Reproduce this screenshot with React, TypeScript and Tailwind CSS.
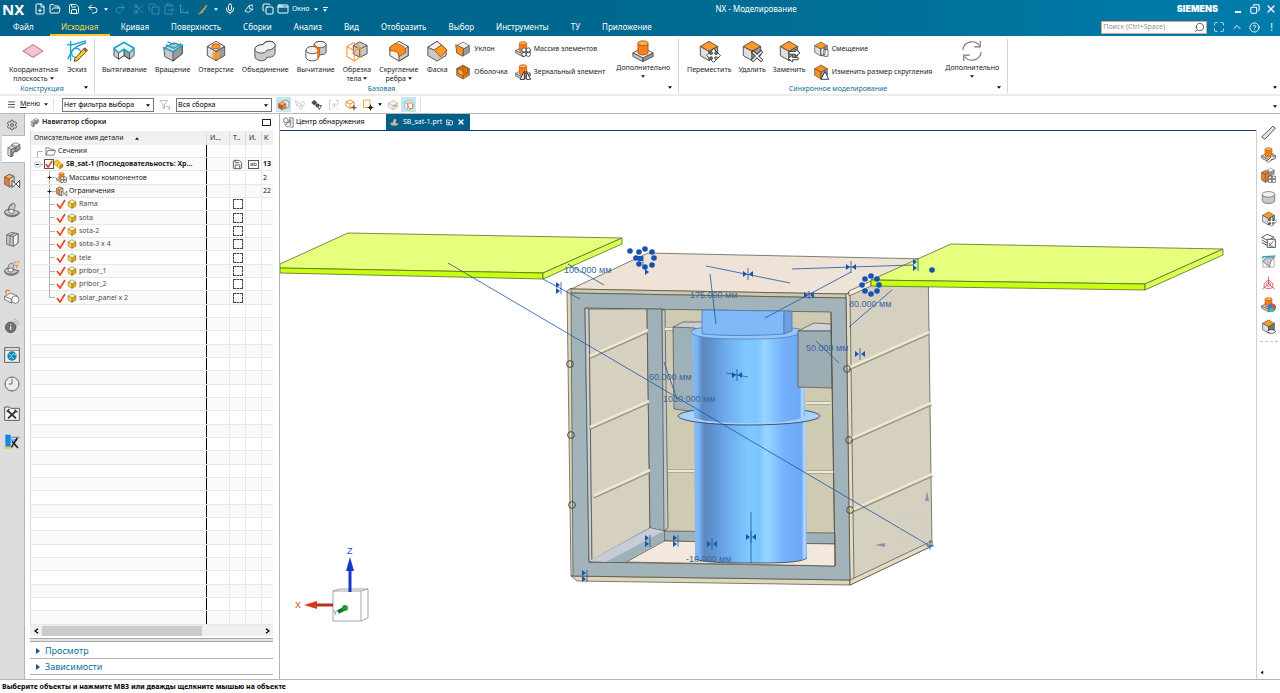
import React, { ReactNode } from "react";
import {
  Save, Undo2, Redo2, Scissors, Copy, ClipboardPaste, Move3d, Mic, AppWindow, Maximize, ChevronUp,
  CircleHelp, Settings, Search, X, FilePlus, FolderOpen, Menu, FolderInput,
} from "lucide-react";

const O = "#ff9a26";
const G1 = "#f1f1f1";
const G2 = "#c9c9c9";
const G3 = "#9b9b9b";
const K = "#4a4a4a";

/* ---------- isometric icon parts ---------- */

type Tint = { top?: string; left?: string; right?: string };

function Cube({ top = G1, left = "#dedede", right = G3 }: Tint) {
  return (
    <g stroke={K} strokeWidth="1" strokeLinejoin="round">
      <path d="M12 1.500l9.500 5.500-9.500 5.500L2.500 7z" fill={top} />
      <path d="M2.500 7l9.500 5.500v10L2.500 17z" fill={left} />
      <path d="M21.500 7L12 12.500v10l9.500-5.500z" fill={right} />
    </g>
  );
}

function Boss() {
  return (
    <g stroke={K} strokeWidth="1" strokeLinejoin="round">
      <path d="M1 14l11 5.500v4L1 18z" fill={G2} />
      <path d="M23 14l-11 5.500v4L23 18z" fill={G3} />
      <path d="M1 14l11 5.500L23 14 12 8.500z" fill={G1} />
      <path d="M6.500 3.500v10.500c0 3 11 3 11 0V3.500" fill="#f77f1d" stroke="#b35408" />
      <ellipse cx="12" cy="3.500" rx="5.500" ry="2.500" fill="#ffb057" stroke="#b35408" />
    </g>
  );
}

function MoveMark() {
  return (
    <path
      d="M17 9.500l3.500 3.500H18.500v2.500H21v-2L24.500 17 21 20.500v-2h-2.500V21h2L17 24.500 13.500 21h2v-2.500H13v2L9.500 17 13 13.500v2h2.500V13h-2z"
      fill="#fff" stroke="#333" strokeWidth="1" strokeLinejoin="round"
    />
  );
}

const glyphs: Record<string, ReactNode> = {
  plane: <path d="M12 5l11 7-11 7-11-7z" fill="#f3c3cf" stroke="#b5637b" strokeWidth="1" />,
  sketch: (
    <g fill="none" strokeWidth="1.500">
      <path d="M1 5C8 7 14 2 22 1M5 1v22M2 21C6 12 8 7 22 3" stroke="#1c9fcb" />
      <circle cx="11" cy="14" r="5" stroke="#1c9fcb" />
      <path d="M10 20L20 9l3 2.500L13 22l-4 1.500z" fill="#ffc933" stroke="#5b4310" strokeWidth="1" />
      <path d="M19 10l1.500-1.500 3 2.500-1.500 1.500z" fill="#d9452f" stroke="#5b4310" strokeWidth=".6" />
    </g>
  ),
  extrude: (
    <g stroke={K} strokeLinejoin="round">
      <path d="M1 9l11-6.500L23 9v8l-5 4-6-4-6 4-5-4z" fill={G2} />
      <path d="M12 10l6 4v7l-6-4z" fill={G3} />
      <path d="M12 10l-6 4v7l6-4z" fill={G1} />
      <path d="M1 9l5 5 6-4 6 4 5-5-11-6.500z" fill={G1} stroke="#14a4d4" strokeWidth="1.600" />
    </g>
  ),
  revolve: (
    <g stroke={K} strokeLinejoin="round">
      <path d="M2 9L13 3l9 3v9l-10 8-9-5z" fill={G2} />
      <path d="M12 13l10-7v9l-10 8z" fill={G3} />
      <path d="M1 8l11 5 11-8M4 5l9 4 8-5M6 2l8 3" fill="none" stroke="#14a4d4" strokeWidth="1.600" />
    </g>
  ),
  hole: (
    <g>
      <Cube />
      <ellipse cx="12" cy="7" rx="4.500" ry="2.600" fill={O} stroke="#b35408" />
      <path d="M8 12v7c1 3 7 3 8 0v-7c-1 2-7 2-8 0z" fill={O} opacity=".85" />
    </g>
  ),
  unite: (
    <g stroke={K} strokeWidth="1">
      <path d="M1 10v8c0 5 12 7 13 1 6 0 9-2 9-5V5c-1-5-12-5-13 0-5 0-9 2-9 5z" fill={G2} />
      <path d="M1 10c0 5 12 6 13 1 6 0 9-3 9-6-1-5-12-4-13 0-5 0-9 2-9 5z" fill={G1} />
    </g>
  ),
  subtract: (
    <g stroke={K} strokeWidth="1">
      <path d="M10 5v8c2 4 13 4 13 0V5C22 .500 11 .500 10 5z" fill={G2} />
      <ellipse cx="16.500" cy="5" rx="6.500" ry="3.500" fill={G1} />
      <path d="M1 11v8c1 5 13 5 14 0v-8" fill="#fff" />
      <ellipse cx="8" cy="11" rx="7" ry="4" fill={G1} />
      <path d="M10 5c3 3 5 4 6 4v8l-2 3V11c-1-2-2-3-4-4z" fill="#f77f1d" stroke="#d2600a" />
    </g>
  ),
  trim: (
    <g fill="none" strokeLinejoin="round">
      <path d="M8 6l7-4 8 4v9l-8 4-7-4z" fill={G2} stroke={K} />
      <path d="M8 6l7 4 8-4M15 10v9" stroke={K} />
      <path d="M1 7l7-4 8 5v10l-7 5-8-5zM1 7l8 5 7-4M9 12v11" stroke={O} strokeWidth="1.200" />
    </g>
  ),
  blend: (
    <g stroke={K} strokeLinejoin="round">
      <path d="M2 8l10-6.500L22 7v10l-10 6-10-6z" fill={G1} />
      <path d="M12 15v8l10-6V7z" fill={G2} />
      <path d="M2 8l5-4c5 0 11 3 12 6v4l-7 4c0-4-4-7-10-6z" fill="#ff8d1a" stroke="#b35408" />
    </g>
  ),
  chamfer: (
    <g stroke={K} strokeLinejoin="round">
      <path d="M2 8l10-6.500L22 10v7l-10 6-10-6z" fill={G2} />
      <path d="M2 8l10-6.500 5 4L9 11z" fill={G1} />
      <path d="M17 5.500l6 5.500-7 7.500-7-7.500z" fill={O} stroke="#b35408" />
    </g>
  ),
  boss: <Boss />,
  move: <g><Cube top={O} /><MoveMark /></g>,
  del: <g><Cube top={O} /><path d="M12 12l11 11M23 12L12 23" stroke="#333" strokeWidth="3.500" /><path d="M13 13l9.500 9.500M22.500 12.500L12.500 22.500" stroke="#fff" strokeWidth="1.600" /></g>,
  replace: <g><Cube top={O} /><path d="M12 12.500h7v-2.500l5 4-5 4v-2.500h-7zM22 21.500h-6V24l-5-4 5-3.500V19h6z" fill="#fff" stroke="#333" /></g>,
  refresh: (
    <g fill="none" stroke="#777" strokeWidth="1.200">
      <path d="M2 11a10 10 0 0 1 18-5M21 1v6.500h-6.500M22 13a10 10 0 0 1-18 5M3 23v-6.500h6.500" />
    </g>
  ),
  draft: <g><Cube /><path d="M1 5.500l12 5.500-1.500 12L2.500 18z" fill="#ff8d1a" stroke={K} /></g>,
  shell: <g><Cube top="#ffb057" left="#f78a20" right="#f78a20" /><path d="M4.500 7L12 3l7.500 4v7L12 18l-7.500-4z" fill="#e57412" stroke="#7c3a05" /><path d="M12 11v7l-7.500-4V7zM12 3v8M19.500 14L12 11" fill="#ffab55" stroke="#a85506" /></g>,
  pattern: <g><Boss /><g fill="#fff" stroke="#333" strokeWidth="1.200"><circle cx="13.500" cy="13.500" r="3.200" /><circle cx="20" cy="13.500" r="3.200" /><circle cx="13.500" cy="20" r="3.200" /><circle cx="20" cy="20" r="3.200" /></g></g>,
  mirror: <g><Boss /><path d="M14 23V11L7.500 23zM17 23V11l6.500 12z" fill="#fff" stroke="#222" strokeWidth="1.300" /></g>,
  offset: <g><Cube top={O} /><path d="M12 11h6v10h-6zM16 13h6.500v10H16z" fill="#fff" stroke="#333" /></g>,
  resize: <g><Cube top="#ff8d1a" left="#ff8d1a" /><path d="M12 23l6-12 5.500 12z" fill="#fff" stroke="#222" strokeWidth="1.300" /></g>,
  navigator: (
    <g stroke={K} strokeLinejoin="round">
      <path d="M9 4l7-3 6 3v8l-6 4-7-3z" fill={G1} />
      <path d="M16 7l6-3v8l-6 4z" fill={G3} />
      <path d="M3 9l6-3 6 3v6l-4 2v5l-3 1.500L3 21z" fill="#dedede" />
      <path d="M3 9l5 3 7-3M8 12v11.500M9 4l7 3" fill="none" />
      <path d="M8 12l7-3v6l-4 2v5l-3 1.500z" fill={G3} />
    </g>
  ),
  constraint: (
    <g>
      <g stroke={K} strokeLinejoin="round">
        <path d="M1 6l7-4 7 3v10l-7 6-7-4z" fill="#f77f1d" />
        <path d="M1 6l7-4 7 3-7 4z" fill="#ffb057" />
        <path d="M8 9l7-4v11l-7 5z" fill="#d8d8d8" />
      </g>
      <path d="M12 11v11l5.500-5.500zM23.500 11v11L18 16.500z" fill="#fff" stroke="#222" strokeWidth="1.200" />
    </g>
  ),
  part: (
    <g stroke={K} strokeLinejoin="round">
      <path d="M1 16c0-3 3-5 8-5l14 5c0 3-6 6-11 6S1 20 1 16z" fill={G3} />
      <path d="M1 15c0-2 3-4 6-3C7 5 11 1 15 2c3 1 2 7-1 10l9 3c-1 3-6 5-11 5S1 18 1 15z" fill={G2} />
      <ellipse cx="11" cy="14" rx="4" ry="3" fill={G1} />
      <path d="M7 12c0-5 3-8 6-8" fill="none" />
    </g>
  ),
  partMark: (
    <g stroke={K} strokeLinejoin="round">
      <path d="M1 17c0-3 3-5 8-5l13 5c0 3-6 6-11 6S1 21 1 17z" fill={G3} />
      <path d="M1 16c0-2 3-4 5-3 0-7 4-9 7-8 3 1 2 6-1 9l10 2c-1 3-6 5-11 5S1 19 1 16z" fill={G2} />
      <ellipse cx="10" cy="15" rx="4" ry="3" fill={G1} />
      <path d="M15 2l3 3M18 2l-3 3M20 1l3 3M23 1l-3 3M16 8h6M19 8v4" stroke="#f07b1c" strokeWidth="1.200" fill="none" />
    </g>
  ),
  books: (
    <g stroke={K} strokeLinejoin="round">
      <path d="M4 6l7-4 10 2v14l-7 5-10-3z" fill={G2} />
      <path d="M4 6l10 2.500L21 4M14 8.500V23M9 7l7-4M9 7.500v14" fill="none" />
      <path d="M14 8.500L21 4v14l-7 5z" fill={G1} />
    </g>
  ),
  reuse: (
    <g stroke={K} strokeLinejoin="round">
      <path d="M1 11l9-5 9 4v4l-8 7-10-5z" fill={G1} />
      <path d="M1 11l10 4 8-5M11 15v6" fill="none" />
      <circle cx="17" cy="16" r="5.500" fill="#fff" />
      <path d="M3 7V2h6" stroke="#f07b1c" strokeWidth="2" fill="none" />
    </g>
  ),
  info: (
    <g>
      <circle cx="10" cy="14" r="8" fill="#707070" stroke="#444" /><path d="M10 12v6M10 9v1.500" stroke="#ddd" strokeWidth="2" />
      <path d="M14 4a8 8 0 0 1 6 7M15 1a11 11 0 0 1 8 9" fill="none" stroke="#999" />
    </g>
  ),
  web: (
    <g>
      <path d="M1 1h22v22H1z" fill="#eee" stroke={K} strokeWidth="1.300" /><path d="M1 5h22" stroke={K} />
      <circle cx="12" cy="13.500" r="7" fill="#1583b5" /><path d="M7 10l4 3 4-3 3 2M8 17l3-2 4 3" stroke="#bfe6f7" fill="none" strokeWidth="1.300" />
    </g>
  ),
  clock: <g fill="#ececec" stroke="#555" strokeWidth="1.300"><circle cx="12" cy="12" r="10.500" /><path d="M12 4v8H7M12 2v1M12 21v1M2 12h1M21 12h1" fill="none" /></g>,
  tools: (
    <g fill="none" stroke="#444" strokeWidth="1.300">
      <path d="M1 23V3h7l2 2h13v18z" fill="#f4f4f4" />
      <path d="M6 9l12 11M18 9L6 20" stroke="#333" strokeWidth="2.800" />
      <path d="M4 10l4-4M16 7l4 4" stroke="#333" strokeWidth="2" />
    </g>
  ),
  prt: <Cube top="#fff1a0" left="#ffd83a" right="#f2a900" />,
  asm: <g stroke="#8a5a00" strokeLinejoin="round"><path d="M1 6l6-4 6 4v7l-6 4-6-4z" fill="#ffcc1f" /><path d="M8 13l6-4 7 4v6l-7 4-6-4z" fill="#ffe15a" /><path d="M14 15l7-3v7l-7 4z" fill="#f77f1d" /></g>,
  folder: <path d="M2 20V4h7l2 3h8v3M2 20l4-10h17l-4 10z" fill="#fff" stroke="#444" strokeWidth="1.400" />,
  ruler: <path d="M1 19L19 2l4 3L6 23z" fill="#e4e4e4" stroke="#444" strokeWidth="1.400" />,
  bossTool: <g><Boss /><path d="M9 23l7-7c-1-3 1-5 4-5l-2 3 2 2 3-2c1 4-2 6-5 5l-6 6z" fill="#fff" stroke="#333" /></g>,
  parts: (
    <g>
      <g transform="translate(8 -1) scale(.62)"><Cube /></g>
      <path d="M1 7l6-3 6 3v7l-2 1v6l-4 2-6-4z" fill="#f77f1d" stroke={K} />
      <path d="M1 7l6 3 6-3M7 10v13" fill="none" stroke={K} />
      <path d="M12 13h5v4h-5zM18 13h5v4h-5zM12 18h5v5h-5zM18 18h5v5h-5z" fill="#fff" stroke="#333" />
    </g>
  ),
  cyl: <g stroke={K}><path d="M2 7v10c0 6 20 6 20 0V7" fill={G2} /><ellipse cx="12" cy="7" rx="10" ry="4.500" fill={G1} /></g>,
  layers: <g stroke="#333" fill="#fff"><path d="M1 15l9 5 9-5M1 11l9 5 9-5M1 7l9-5 11 5-10 5z" strokeWidth="1.300" /><path d="M10 10h13v13H10z" strokeWidth="1.300" /><path d="M13 21l8-9M14 15v6h6" fill="none" /></g>,
  surf: <g fill="none" stroke="#888"><path d="M3 4h18v17H3z" /><path d="M8 6h13c-5 3-7 9-7 15L3 12z" fill={G2} stroke={K} /><path d="M1 6c7-4 14-1 22-3" stroke="#14a4d4" strokeWidth="1.800" /></g>,
  csys: <g fill="none" stroke="#d4485a" strokeWidth="1.300"><path d="M12 13V1M12 13l-10 8M12 13l10 8M5 18a9 9 0 0 1 7-11 9 9 0 0 1 7 11c-4 3-10 3-14 0z" /><path d="M12 10l3 2v3l-3 2-3-2v-3z" /></g>,
  bossColor: <g><Boss /><circle cx="17" cy="17" r="6.500" fill="#2f7fe0" /><path d="M17 17v-6.500a6.500 6.500 0 0 1 6 8z" fill="#f04b2d" /><path d="M17 17l5.500 3.500a6.500 6.500 0 0 1-11 0z" fill="#3cc66b" /></g>,
  cubeEye: <g><Cube top={O} right="#777" /><path d="M10 20c3-4 10-4 13.500 0-4 4-10.500 4-13.500 0z" fill="#fff" stroke="#222" strokeWidth="1.300" /></g>,
  selCube: <g><path d="M8 6l6-4 8 3v10l-6 4-8-4z" fill="#e8e8e8" stroke={K} /><g transform="translate(-1 4) scale(.78)"><Cube top="#ffb057" left="#f04e12" right="#f77f1d" /></g></g>,
  links: <g fill="none" stroke="#c2c2c2" strokeWidth="1.600"><path d="M3 3l7 5-5 6z" /><circle cx="17" cy="9" r="4" /><path d="M10 13l8 3-5 6z" /></g>,
  linksDark: <g fill="#666" stroke="#222" strokeWidth="1.600"><path d="M7 2v12M1 8h12" /><path d="M4 5h6v6H4zM11 11h6v6h-6z" /><path d="M15 15l8-1-5 9z" fill="#fff" /></g>,
  bracket: <g fill="none" stroke="#c2c2c2" strokeWidth="1.600"><path d="M7 3H3v18h4M16 3h4v8M8 12h10M12 7v11M16 17l5 5" /></g>,
  wire: <g fill="none" stroke="#ef7d10" strokeWidth="1.700"><path d="M10 2l8 4v8l-8 5-8-5V6zM2 6l8 4 8-4M10 10v9" /><path d="M18 12v11M12.500 17.500h11" stroke="#222" /></g>,
  box: <g fill="none" strokeWidth="1.800"><path d="M3 2h13v15H3z" stroke="#efa02a" /><path d="M17 11v12M11 17h12M14 14l6 6M20 14l-6 6" stroke="#222" /></g>,
  ghost: <g fill="#eee" stroke="#999"><path d="M12 3l9 5v8l-9 6-9-6V8zM3 8l9 5 9-5M12 13v9" /><path d="M12 13l8 1" stroke={O} strokeWidth="3" /></g>,
  ghost2: <g fill="#eee" stroke="#888"><path d="M12 2l9 5v10l-9 6-9-6V7z" /><path d="M9 8h7l3 3v8h-7z" fill="#fff" stroke="#f07b1c" strokeWidth="1.800" /><path d="M3 7l6 3v10" fill="none" /></g>,
  brush: <path d="M3 22l5-4L20 3l2 1L11 19z" fill="#ff9a26" stroke="#ffb057" />,
  touch: <g fill="none" stroke="#fff" strokeWidth="2"><path d="M2 17L12 4l2 8h8L11 20z" /><path d="M12 4l8-2v6" /></g>,
  filter: <g fill="none" stroke="#aaa" strokeWidth="1.500"><path d="M2 3h15l-6 8v9l-3-2v-7zM13 15h8v6M21 21l-3-3" /></g>,
  hand: <g fill="none" stroke="#444" strokeWidth="1.500"><path d="M2 4l5-2 4 3v6l-4 2-5-2zM13 2h9v20h-6" /><path d="M4 14c0 10 12 10 13 1V6h-3v7c-5-3-8 2-5 5" /></g>,
  npc: <g><path d="M2 1h8v18H2z" fill="#1687e0" /><path d="M10 5h13M10 9h10" stroke="#4aa3e8" strokeWidth="2" /><path d="M11 20l9-14M12 11l9 10" stroke="#222" strokeWidth="2.500" /><path d="M1 19h9v3H1z" fill="#f2c12e" /></g>,
};

function Glyph({ name, className }: { name: string; className: string }) {
  return (
    <svg viewBox="0 0 24 24" className={`shrink-0 overflow-visible ${className}`} aria-hidden="true">
      {glyphs[name]}
    </svg>
  );
}

function Caret({ className = "" }: { className?: string }) {
  return (
    <svg viewBox="0 0 6 4" className={`h-[3px] w-[4px] shrink-0 ${className}`} aria-hidden="true">
      <path d="M0 0h6L3 4z" fill="currentColor" />
    </svg>
  );
}

/* ---------- title bar ---------- */

function Quick({ label, dim, children }: { label: string; dim?: boolean; children: ReactNode }) {
  return (
    <button aria-label={label} className={`flex h-[17px] w-[15px] shrink-0 items-center justify-center ${dim ? "opacity-25" : ""}`}>
      {children}
    </button>
  );
}

const tabs = ["Кривая", "Поверхность", "Сборки", "Анализ", "Вид", "Отобразить", "Выбор", "Инструменты", "ТУ", "Приложение"];

function Header() {
  const ic = "h-3 w-3";
  return (
    <header className="h-[36px] shrink-0 bg-linear-to-r from-[#00628a] via-[#00698f] to-[#007cab] text-white">
      <div className="grid h-[18px] grid-cols-[1fr_auto_1fr] items-center">
        <div className="flex items-center">
          <span className="w-[32px] pl-[2px] text-[15px] leading-[18px] font-bold">NX</span>
          <Quick label="Создать"><FilePlus className={ic} /></Quick>
          <Quick label="Открыть"><FolderOpen className={ic} /></Quick>
          <span className="w-[4px]" />
          <Quick label="Сохранить"><Save className={ic} /></Quick>
          <span className="w-[4px]" />
          <Quick label="Отменить"><Undo2 className={ic} /></Quick>
          <Caret className="mx-[4px]" />
          <Quick label="Вернуть" dim><Redo2 className={ic} /></Quick>
          <span className="w-[4px]" />
          <Quick label="Вырезать" dim><Scissors className={ic} /></Quick>
          <Quick label="Копировать" dim><Copy className={ic} /></Quick>
          <Quick label="Вставить" dim><ClipboardPaste className={ic} /></Quick>
          <Quick label="Переместить" dim><Move3d className={ic} /></Quick>
          <span className="w-[4px]" />
          <Quick label="Кисть"><Glyph name="brush" className="h-[11px] w-[11px]" /></Quick>
          <Caret className="mx-[4px]" />
          <Quick label="Микрофон"><Mic className={ic} /></Quick>
          <span className="w-[4px]" />
          <Quick label="Касание"><Glyph name="touch" className="h-[10px] w-[10px]" /></Quick>
          <span className="w-[4px]" />
          <Quick label="Переключить окно"><Copy className={ic} /></Quick>
          <Quick label="Окно приложения"><AppWindow className={ic} /></Quick>
          <button className="flex items-center gap-[4px] pl-[2px] text-[7px]">
            Окно <Caret />
          </button>
          <span className="ml-[5px] flex flex-col items-center gap-[1px]">
            <span className="h-[1px] w-[5px] bg-white" />
            <Caret />
          </span>
        </div>
        <h1 className="pl-[232px] text-[8px] leading-[18px] whitespace-nowrap">NX - Моделирование</h1>
        <div className="flex items-center justify-end gap-[5px] pr-[3px]">
          <span className="mr-[12px] font-[Inter] text-[9px] font-black">SIEMENS</span>
          <button aria-label="Свернуть" className="flex h-[10px] w-[10px] items-end pb-[1px]"><span className="h-[2px] w-[6px] bg-white" /></button>
          <button aria-label="Восстановить"><Copy className="h-[10px] w-[10px] -scale-x-100" strokeWidth={2.5} /></button>
          <button aria-label="Закрыть"><X className="h-[12px] w-[12px]" strokeWidth={2.5} /></button>
        </div>
      </div>
      <div className="flex h-[18px] items-stretch justify-between">
        <nav className="flex items-stretch text-[8px]">
          <button className="pr-[15px] pl-[13px]">Файл</button>
          <button className="ml-[1px] w-[60px] border-b-2 border-[#ffc72c] pt-[2px] text-[#ffd24a]">Исходная</button>
          {tabs.map((t) => (
            <button key={t} className="px-[11px]">{t}</button>
          ))}
        </nav>
        <div className="flex items-center gap-[6px] pr-[7px]">
          <label className="flex h-[13px] w-[106px] items-center border border-[#d9a38f] bg-white text-black">
            <input aria-label="Поиск" placeholder="Поиск (Ctrl+Space)" className="w-0 grow pl-[1px] text-[7px] outline-none placeholder:text-[#909090]" />
            <Search className="mr-[1px] h-[11px] w-[11px] -scale-x-100 text-[#555]" />
          </label>
          <Maximize className="h-3 w-3" strokeWidth={1.5} />
          <ChevronUp className="h-3 w-3" />
          <CircleHelp className="h-[11px] w-[11px]" />
          <span className="ml-[4px] text-[10px] leading-[12px]">!</span>
        </div>
      </div>
    </header>
  );
}

/* ---------- ribbon ---------- */

function Big({ icon, label, second, caret, down }: { icon: string; label: string; second?: string; caret?: boolean; down?: boolean }) {
  return (
    <button className="flex flex-col items-center pt-[4px] leading-[9px] whitespace-nowrap">
      <Glyph name={icon} className="h-[22px] w-[22px]" />
      <span className={down ? "pt-[1px]" : "pt-[3px]"}>{label}</span>
      {second && (
        <span className="flex items-center gap-[2px]">{second}<Caret /></span>
      )}
      {caret && <Caret className="mt-[3px]" />}
    </button>
  );
}

function Small({ icon, label }: { icon: string; label: string }) {
  return (
    <button className="flex items-center gap-[3px] whitespace-nowrap">
      <Glyph name={icon} className="h-[16px] w-[16px]" />
      {label}
    </button>
  );
}

function Group({ title, children, className = "" }: { title: string; children: ReactNode; className?: string }) {
  return (
    <section aria-label={title} className={`mt-[3px] mb-[1px] flex flex-col border-r border-[#d6d6d6] ${className}`}>
      <div className="flex grow items-start">{children}</div>
      <div className="flex h-[9px] items-center pr-[6px] leading-[9px] text-[#0d6f9b]">
        <span className="grow text-center">{title}</span>
        <Caret className="mb-[3px] text-black" />
      </div>
    </section>
  );
}

function Ribbon() {
  const column = "flex flex-col gap-[7px] pt-[5px]";
  return (
    <div className="flex h-[60px] shrink-0 border-b-2 border-[#ececec] bg-white text-[7px] text-[#1c1c1c]">
      <Group title="Конструкция" className="w-[95px]">
        <div className="-mt-[3px] flex gap-[8px] pl-[9px]">
          <Big icon="plane" label="Координатная" second="плоскость" />
          <Big icon="sketch" label="Эскиз" />
        </div>
      </Group>
      <Group title="Базовая" className="w-[584px]">
        <div className="-mt-[3px] flex gap-[7px] pl-[7px]">
          <div className="flex gap-[8px]">
            <Big icon="extrude" label="Вытягивание" />
            <Big icon="revolve" label="Вращение" />
            <Big icon="hole" label="Отверстие" />
            <Big icon="unite" label="Объединение" />
            <Big icon="subtract" label="Вычитание" />
            <Big icon="trim" label="Обрезка" second="тела" />
            <Big icon="blend" label="Скругление" second="ребра" />
            <Big icon="chamfer" label="Фаска" />
          </div>
          <div className={column}>
            <Small icon="draft" label="Уклон" />
            <Small icon="shell" label="Оболочка" />
          </div>
          <div className={column}>
            <Small icon="pattern" label="Массив элементов" />
            <Small icon="mirror" label="Зеркальный элемент" />
          </div>
          <div className="pl-[4px]"><Big icon="boss" label="Дополнительно" caret down /></div>
        </div>
      </Group>
      <Group title="Синхронное моделирование" className="w-[329px]">
        <div className="-mt-[3px] flex gap-[7px] pl-[8px]">
          <Big icon="move" label="Переместить" />
          <Big icon="del" label="Удалить" />
          <Big icon="replace" label="Заменить" />
          <div className={column}>
            <Small icon="offset" label="Смещение" />
            <Small icon="resize" label="Изменить размер скругления" />
          </div>
          <div className="pl-[6px]"><Big icon="refresh" label="Дополнительно" caret down /></div>
        </div>
      </Group>
      <div className="flex grow items-end justify-end pr-[3px] pb-[5px]"><Caret className="text-black" /></div>
    </div>
  );
}

function Pick({ label, value, className }: { label: string; value: string; className: string }) {
  return (
    <label className={`relative block h-[14px] border border-[#777] bg-white ${className}`}>
      <select aria-label={label} className="block h-[12px] w-full appearance-none pl-[1px] text-[7px] leading-[12px] outline-none">
        <option>{value}</option>
      </select>
      <Caret className="pointer-events-none absolute top-[5px] right-[3px]" />
    </label>
  );
}

function SelectionBar() {
  const cell = "flex h-[15px] w-[17px] items-center justify-center";
  return (
    <div className="flex h-[18px] shrink-0 items-center border-b border-[#b9b9b9] bg-white text-[7px] text-black">
      <button className="ml-[7px] flex items-center gap-[4px] text-[#222]">
        <Menu className="h-[9px] w-[9px]" />
        <span><u>М</u>еню</span>
        <Caret />
      </button>
      <span className="mr-[8px] ml-[5px] h-[13px] w-[1px] bg-[#ddd]" />
      <Pick label="Фильтр выбора" value="Нет фильтра выбора" className="w-[92px]" />
      <Glyph name="filter" className="mx-[5px] h-[12px] w-[12px]" />
      <Pick label="Область выбора" value="Вся сборка" className="w-[96px]" />
      <div className="ml-[4px] flex items-center">
        <button aria-label="Тела" className="flex h-[15px] w-[15px] items-center justify-center bg-[#c5e6ee]"><Glyph name="selCube" className="h-[12px] w-[12px]" /></button>
        <button aria-label="Связи" className={cell}><Glyph name="links" className="h-[12px] w-[12px]" /></button>
        <button aria-label="Цепочка" className={cell}><Glyph name="linksDark" className="h-[11px] w-[11px]" /></button>
        <button aria-label="Скобки" className={cell}><Glyph name="bracket" className="h-[12px] w-[12px]" /></button>
        <button aria-label="Каркас" className={cell}><Glyph name="wire" className="h-[12px] w-[12px]" /></button>
        <button aria-label="Рамка" className={cell}><Glyph name="box" className="h-[12px] w-[12px]" /></button>
        <Caret className="mx-[2px]" />
        <button aria-label="Скрытые грани" className={cell}><Glyph name="ghost" className="h-[12px] w-[12px]" /></button>
        <button aria-label="Внутренние грани" className="flex h-[15px] w-[15px] items-center justify-center bg-[#c5e6ee]"><Glyph name="ghost2" className="h-[12px] w-[12px]" /></button>
        <span className="ml-[4px] h-[13px] w-[1px] bg-[#ddd]" />
      </div>
      <Caret className="mt-[4px] mr-[3px] ml-auto" />
    </div>
  );
}

/* ---------- resource bar and navigator ---------- */

const resources = [
  ["Ограничения", "constraint"], ["Деталь", "part"], ["Библиотека", "books"], ["Дефекты", "partMark"],
  ["Повторное использование", "reuse"], ["Сведения", "info"], ["Браузер", "web"],
  ["Журнал", "clock"], ["Инструменты", "tools"], ["Процессы", "npc"],
];

function Rail() {
  return (
    <aside className="flex w-[25px] shrink-0 flex-col border-r border-[#b4b4b4] bg-[#dcdcdc]">
      <button aria-label="Параметры" className="flex h-[21px] items-center justify-center"><Settings className="h-3 w-3 text-[#555]" /></button>
      <button aria-label="Навигатор сборки" className="mb-[3px] ml-[2px] flex h-[28px] w-[23px] items-center justify-center border-y border-[#bbb] bg-white"><Glyph name="navigator" className="h-[15px] w-[15px]" /></button>
      {resources.map(([label, icon]) => (
        <button key={label} aria-label={label} className="flex h-[29px] items-center justify-center">
          <Glyph name={icon} className="h-[16px] w-[16px]" />
        </button>
      ))}
    </aside>
  );
}

type Row = { kind: "folder" | "root" | "group" | "leaf"; name: string; icon?: string; count?: string };

const rows: Row[] = [
  { kind: "folder", name: "Сечения" },
  { kind: "root", name: "SB_sat-1 (Последовательность: Хр...", count: "13" },
  { kind: "group", name: "Массивы компонентов", icon: "pattern", count: "2" },
  { kind: "group", name: "Ограничения", icon: "constraint", count: "22" },
  { kind: "leaf", name: "Rama" },
  { kind: "leaf", name: "sota" },
  { kind: "leaf", name: "sota-2" },
  { kind: "leaf", name: "sota-3 x 4" },
  { kind: "leaf", name: "tele" },
  { kind: "leaf", name: "pribor_1" },
  { kind: "leaf", name: "pribor_2" },
  { kind: "leaf", name: "solar_panel x 2" },
];
const blanks = Array.from({ length: 24 }, (_, i) => i);

function NameCell({ row, last }: { row: Row; last: boolean }) {
  const line = { stroke: "#b5b5b5", strokeWidth: 1, fill: "none" };
  if (row.kind === "folder")
    return (
      <div className="flex items-center gap-[2px] pl-[5px]">
        <svg className="h-[13px] w-[7px]"><path d="M1.500 13V6.500H7" {...line} /></svg>
        <Glyph name="folder" className="h-[11px] w-[11px]" />
        <span>{row.name}</span>
      </div>
    );
  if (row.kind === "root")
    return (
      <div className="flex items-center pl-[3px]">
        <svg className="h-[13px] w-[10px]"><path d="M0 6.500H9" {...line} /><path d="M1 4h5v5H1z" fill="#fff" stroke="#ccc" /><path d="M2 6.500h3" stroke="#333" /></svg>
        <span className="flex h-[10px] w-[10px] items-center justify-center border border-[#555] bg-white">
          <svg viewBox="0 0 10 10" className="h-[8px] w-[8px]"><path d="M1 5l3 4 5-8" fill="none" stroke="#e8461e" strokeWidth="2" /></svg>
        </span>
        <Glyph name="asm" className="mr-[2px] h-[10px] w-[10px]" />
        <span className="font-bold">{row.name}</span>
      </div>
    );
  if (row.kind === "group")
    return (
      <div className="flex items-center pl-[15px]">
        <svg className="h-[13px] w-[10px]"><path d="M3.500 0V13M3.500 6.500H10" {...line} /><path d="M1 4h5v5H1z" fill="#fff" /><path d="M1.500 6.500h4M3.500 4.500v4" stroke="#222" /></svg>
        <Glyph name={row.icon ?? ""} className="mr-[2px] h-[11px] w-[11px]" />
        <span>{row.name}</span>
      </div>
    );
  return (
    <div className="flex items-center pl-[15px] text-[#4c4c4c]">
      <svg className="h-[13px] w-[10px]"><path d={last ? "M3.500 0V6.500H9" : "M3.500 0V13M3.500 6.500H9"} {...line} /></svg>
      <svg viewBox="0 0 10 10" className="mr-[1px] h-[10px] w-[10px]"><path d="M1 5l3 4 5-8" fill="none" stroke="#e8461e" strokeWidth="1.700" /></svg>
      <Glyph name="prt" className="mr-[2px] h-[10px] w-[10px]" />
      <span>{row.name}</span>
    </div>
  );
}

const cellLine = "border-b border-[#e8e8e8] p-0 whitespace-nowrap";
const nameLine = "border-b border-[#e8e8e8] p-0 whitespace-nowrap shadow-[1px_0_0_#000]";

function Navigator() {
  return (
    <section aria-label="Навигатор сборки" className="flex w-[255px] shrink-0 flex-col border-r border-[#b4b4b4] bg-white pr-[6px] pl-[5px] text-[7px] text-[#1a1a1a]">
      <div className="flex h-[17px] shrink-0 items-center pr-[2px]">
        <Glyph name="navigator" className="mr-[3px] h-[9px] w-[9px]" />
        <h2 className="grow font-semibold">Навигатор сборки</h2>
        <button aria-label="Развернуть" className="h-[7px] w-[9px] border border-[#222]" />
      </div>
      <div className="min-h-0 grow overflow-hidden border-l border-[#d8d8d8]">
        <table className="w-full table-fixed border-separate border-spacing-0">
          <colgroup>
            <col className="w-[175px]" />
            <col className="w-[24px]" />
            <col className="w-[16px]" />
            <col className="w-[16px]" />
            <col />
          </colgroup>
          <thead>
            <tr className="h-[14px] bg-[#f0f0f0] text-left">
              <th className="p-0 pl-[3px] font-normal"><span className="flex items-center gap-[11px]">Описательное имя детали <Caret className="rotate-180" /></span></th>
              <th className="border-x border-[#ddd] p-0 pl-[3px] font-normal">И...</th>
              <th className="border-r border-[#ddd] p-0 pl-[3px] font-normal">Т..</th>
              <th className="border-r border-[#ddd] p-0 pl-[3px] font-normal">И.</th>
              <th className="p-0 pl-[2px] font-normal">К</th>
            </tr>
          </thead>
          <tbody>
            {rows.map((r, i) => (
              <tr key={r.name} className={`${i % 3 === 2 ? "h-[14px]" : "h-[13px]"} ${i % 2 ? "bg-[#fafafa]" : "bg-white"} leading-[12px]`}>
                <td className={nameLine}><div className="-my-[1px]"><NameCell row={r} last={i === rows.length - 1} /></div></td>
                <td className={`${cellLine} border-r`} />
                <td className={`${cellLine} border-r`}>
                  {r.kind === "leaf" && <span className="mx-auto block h-[10px] w-[10px] border border-dashed border-[#444]" />}
                  {r.kind === "root" && <Save className="mx-auto block h-[11px] w-[11px] text-[#555]" />}
                </td>
                <td className={`${cellLine} border-r`}>
                  {r.kind === "root" && <span className="mx-auto block h-[9px] w-[11px] border border-[#555] text-center text-[6px] leading-[7px]">ab</span>}
                </td>
                <td className={`${cellLine} pl-[1px] ${r.kind === "root" ? "font-bold" : ""}`}>{r.count}</td>
              </tr>
            ))}
            {blanks.map((i) => (
              <tr key={i} className={`${i % 3 === 2 ? "h-[14px]" : "h-[13px]"} ${i % 2 ? "bg-[#fafafa]" : "bg-white"}`}>
                <td className={nameLine} />
                <td className={`${cellLine} border-r`} />
                <td className={`${cellLine} border-r`} />
                <td className={`${cellLine} border-r`} />
                <td className={cellLine} />
              </tr>
            ))}
          </tbody>
        </table>
      </div>
      <div className="flex h-[11px] shrink-0 items-center bg-[#efefef] text-black">
        <button aria-label="Влево" className="flex h-full w-[12px] items-center justify-center"><svg viewBox="0 0 6 8" className="h-[6px] w-[5px]"><path d="M5 1L1 4l4 3" fill="none" stroke="currentColor" strokeWidth="1.800" /></svg></button>
        <div className="h-[10px] grow"><div className="h-full w-[73%] bg-[#cbcbcb]" /></div>
        <button aria-label="Вправо" className="flex h-full w-[12px] items-center justify-center"><svg viewBox="0 0 6 8" className="h-[6px] w-[5px]"><path d="M1 1l4 3-4 3" fill="none" stroke="currentColor" strokeWidth="1.800" /></svg></button>
      </div>
      <div className="mt-[2px] mb-[1px] h-[4px] shrink-0 border-y border-[#aaa] bg-[#e2e2e2]" />
      {["Просмотр", "Зависимости"].map((t) => (
        <button key={t} className="flex h-[16px] shrink-0 items-center gap-[5px] border-b border-[#b4b4b4] pl-[6px] text-[9px] text-[#0d6f9b]">
          <svg viewBox="0 0 4 6" className="h-[6px] w-[4px]"><path d="M0 0l4 3-4 3z" fill="#0a5a86" /></svg>
          {t}
        </button>
      ))}
      <div className="h-[4px] shrink-0" />
    </section>
  );
}

/* ---------- graphics window ---------- */

const B = "#1a56a8";

function Bow({ x, y, bar = 6 }: { x: number; y: number; bar?: number }) {
  return (
    <g fill={B}>
      <path d={`M${x - 5} ${y - 3}v6l4-3zM${x + 5} ${y - 3}v6l-4-3z`} />
      <path d={`M${x} ${y - bar}V${y + bar}`} stroke={B} strokeWidth=".8" />
    </g>
  );
}

function Align({ x, y }: { x: number; y: number }) {
  return (
    <g fill={B}>
      <path d={`M${x - 3} ${y - 6}v6l4-3zM${x - 3} ${y}v6l4-3z`} />
      <path d={`M${x + 2} ${y - 6}V${y + 6}`} stroke={B} strokeWidth=".8" />
    </g>
  );
}

const dots = [
  [630, 251], [639, 252], [645, 249], [652, 252], [654, 258], [652, 265], [645, 267], [639, 264], [636, 258],
  [865, 279], [871, 276], [877, 279], [879, 285], [877, 291], [871, 294], [865, 291], [862, 285], [932, 270],
];
const bolts = [[847, 369], [849, 440], [850, 510], [570, 364], [571, 435], [572, 505]];
const dims: [number, number, string][] = [
  [564, 273, "100.000 мм"], [690, 298, "175.000 мм"], [849, 307, "80.000 мм"], [806, 351, "50.000 мм"],
  [649, 380, "60.000 мм"], [663, 402, "1030.000 мм"], [686, 562, "-10.000 мм"],
];

function Scene() {
  return (
    <svg viewBox="280 131 976 547" preserveAspectRatio="xMinYMin meet" className="block h-full w-full" role="img" aria-label="Модель спутника">
      <defs>
        <linearGradient id="body" x1="0" x2="1">
          <stop offset="0" stopColor="#86bdf5" />
          <stop offset=".05" stopColor="#78b0f0" />
          <stop offset=".09" stopColor="#5c88bf" />
          <stop offset=".17" stopColor="#5f92cf" />
          <stop offset=".3" stopColor="#6fabef" />
          <stop offset=".48" stopColor="#7cc9ff" />
          <stop offset=".58" stopColor="#7cc6ff" />
          <stop offset=".64" stopColor="#98d6ff" />
          <stop offset=".72" stopColor="#84c4ff" />
          <stop offset=".8" stopColor="#76b2fb" />
          <stop offset=".95" stopColor="#6ca8f4" />
          <stop offset=".98" stopColor="#b9dcff" />
          <stop offset="1" stopColor="#6ca8f4" />
        </linearGradient>
      </defs>

      <g stroke="#4f4b40" strokeWidth=".7" strokeLinejoin="round">
        {/* outer shell */}
        <path d="M567 291l4-3 4 5 3 284-7-1z" fill="#ded6bb" />
        <path d="M846 294l82-35 4 287-82 39z" fill="#d6d0c0" />
        <path d="M648 253l280 6-82 35-275-5z" fill="#eee3d6" />
        <path d="M571 289l275 5v4l-275-5z" fill="#cfc8b0" />
        <path d="M571 576l279 4v5l-273-4z" fill="#ded6bb" />
        <path d="M846 294l4-1 4 288-4 4z" fill="#e3dcc4" />
        <path d="M871 281l-22 10v5l22-10z" fill="#f3ede0" />
        <path d="M850 580l82-39v5l-82 39z" fill="#e3dcc4" />
        {/* front frame and interior */}
        <path d="M571 293l275 5 4 282-277-4z" fill="#a2b4ba" />
        <path d="M585 308l246 4 4 254-246-4z" fill="#cfcbb2" />
        <path d="M585 308l4 1 3 251-3 2z" fill="#c6d0d8" />
        <path d="M589 309h58l3 219-58 32z" fill="#d6d0c0" />
        <path d="M647 309h15l3 222-15-3z" fill="#9fb1b8" />
        <path d="M662 310h3l3 218-4 3z" fill="#bfc8d0" />
        <path d="M664 531l171 2v11l-171-3z" fill="#9fb1b8" />
        <path d="M664 541l171 3v22l-209-4z" fill="#f2e8dc" />
        <path d="M589 562l61-34 14 3v10l-38 21z" fill="#9fb1b8" />
        <path d="M589 561l61-33 14 3-58 31z" fill="#c6cdd6" stroke="none" />
        <path d="M607 562l57-31v10l-38 21z" fill="#9fb1b8" stroke="none" />
      </g>

      {/* stiffeners */}
      <g fill="none" stroke="#9c967f" strokeWidth="4">
        <path d="M590 357l58-26M590 428l59-26M593 497l57-26M848 369l81-36M850 440l81-36M852 511l80-36M665 329h8M668 471h28M806 403h25M807 472h27" />
      </g>
      <g fill="none" stroke="#eee7d2" strokeWidth="2.600">
        <path d="M590 356l58-26M590 427l59-26M593 496l57-26M848 368l81-36M850 439l81-36M852 510l80-36M665 329h8M668 471h28M806 403h25M807 472h27" />
      </g>

      <g stroke="#4f4b40" strokeWidth=".7" strokeLinejoin="round">
        <path d="M673 327l10-5h22v6l-20 2z" fill="#c6cdd6" />
        <path d="M673 327l22 1 1 84-22-3z" fill="#9fb1b8" />
      </g>

      {/* telescope */}
      <g strokeWidth=".8" strokeLinejoin="round">
        <path d="M694 400h111l2 158c-14 6-30 5-52 5s-50 0-60-4z" fill="url(#body)" />
        <path d="M695 559c10 4 38 4 60 4s45 0 52-5" fill="none" stroke="#334" />
        <ellipse cx="749" cy="416" rx="71" ry="9" fill="#a6d2ff" stroke="#334" />
        <path d="M692 333h111l2 83c-12 7-34 7-56 7s-44-1-55-5z" fill="url(#body)" />
        <path d="M691 331c6-3 8-3 11-3h90l8 1c2 9-24 10-54 10s-55-1-55-8z" fill="#92c8ff" stroke="#5c7ea8" />
        <path d="M702 310l82 1v23c-30 2-60 2-82 0z" fill="#80b9f8" stroke="#4a7ab5" />
        <path d="M784 311h8v20l-8 3z" fill="#6f9fe0" stroke="#4a7ab5" />
      </g>

      {/* instrument in front of the telescope */}
      <g stroke="#4f4b40" strokeWidth=".7" strokeLinejoin="round">
        <path d="M798 331l16-8 17 1v7z" fill="#ccd3da" />
        <path d="M798 331h33l1 57-34-1z" fill="#9caeb4" />
        <path d="M831 312l4 254" />
      </g>

      {/* solar panels */}
      <g stroke="#5d6b2a" strokeWidth=".8" strokeLinejoin="round">
        <path d="M348 233l274 5-79 35-263-5v-4z" fill="#e6ff7c" />
        <path d="M280 268l263 5v6l-263-6z" fill="#c6ff10" />
        <path d="M543 273l79-35v6l-79 35z" fill="#d8ff55" />
        <path d="M951 244l272 5-78 35-274-4z" fill="#e6ff7c" />
        <path d="M871 280l274 4v6l-274-4z" fill="#c6ff10" />
        <path d="M1145 284l78-35v6l-78 35z" fill="#d8ff55" />
      </g>

      <g fill="none" stroke="#3d3a30" strokeWidth=".9">
        {bolts.map(([x, y]) => <circle key={`${x}-${y}`} cx={x} cy={y} r="3.400" />)}
      </g>

      {/* constraint marks */}
      <g fill="none" stroke={B} strokeWidth=".8">
        <path d="M448 263L930 546M543 279l37 20M568 264l36 21M706 266l84 17M710 274l6 50M792 269l59-2M851 267l63-2M765 318l86-46M849 327l43-37M816 341l23 22M664 362l13 37M726 373l22 4M751 512v51M930 540v10M926 546h8M643 256v10" />
      </g>
      <Bow x={748} y={274} /><Bow x={851} y={267} /><Bow x={809} y={295} bar={4} /><Bow x={860} y={354} />
      <Bow x={737} y={375} /><Bow x={751} y={537} /><Bow x={712} y={544} />
      <Align x={559} y={288} /><Align x={916} y={265} /><Align x={648} y={541} /><Align x={676} y={541} /><Align x={585} y={576} />
      <path d="M645 269v6l4-3zM638 256h5v5h-5z" fill={B} />
      <g fill="#1552b4">
        {dots.map(([x, y]) => <circle key={`${x}-${y}`} cx={x} cy={y} r="2.800" />)}
      </g>
      <g fill="#3c64a0" fontFamily="Liberation Sans, sans-serif" fontSize="9">
        {dims.map(([x, y, t]) => <text key={t} x={x} y={y}>{t}</text>)}
      </g>
      <g fill="#8d94a6"><path d="M925 501h4l-2-10zM875 545l10-2v4z" /></g>
      <path d="M900 517h22v23h-22z" fill="none" stroke="#cbcbd2" strokeWidth=".6" />

      {/* view triad */}
      <g stroke="#a5a5a5" fill="#fff">
        <path d="M333 591h28v30h-28zM333 591l7-2h28l-7 2M368 589v29l-7 3" />
      </g>
      <path d="M350 592v-22" stroke="#1639c8" strokeWidth="3" /><path d="M346 571h8l-4-14z" fill="#1639c8" />
      <path d="M333 605h-18" stroke="#b5321a" strokeWidth="3" /><path d="M317 601v8l-13-4z" fill="#d63b18" />
      <path d="M338 612l8-4" stroke="#14712a" strokeWidth="4" /><circle cx="345" cy="608" r="3" fill="#1f9a3c" />
      <g fontFamily="Liberation Sans, sans-serif" fontSize="9">
        <text x="347" y="554" fill="#2a46c8">Z</text>
        <text x="295" y="608" fill="#e04428">X</text>
        <text x="333" y="615" fontSize="7" fill="#2c9a3c">Y</text>
      </g>
    </svg>
  );
}

const sideTools = [
  ["Измерить", "ruler"], ["Настройка элемента", "bossTool"], ["Компонент", "parts"], ["Цилиндр", "cyl"], ["Переместить грань", "move"],
  ["Слои", "layers"], ["Поверхность", "surf"], ["Система координат", "csys"], ["Цвет", "bossColor"], ["Показать", "cubeEye"],
];

function Graphics() {
  return (
    <main className="flex min-w-0 grow flex-col">
      <div role="tablist" className="flex h-[16px] shrink-0 items-stretch text-[7px]">
        <button role="tab" className="flex w-[106px] items-center gap-[2px] pl-[3px]">
          <Glyph name="hand" className="h-[11px] w-[11px]" />
          Центр обнаружения
        </button>
        <button role="tab" aria-selected="true" className="flex w-[84px] items-center gap-[4px] bg-[#00608a] pl-[4px] text-white">
          <Glyph name="part" className="h-[9px] w-[9px]" />
          SB_sat-1.prt
          <FolderInput className="h-[7px] w-[7px]" strokeWidth={3} />
          <X className="h-[8px] w-[8px]" strokeWidth={4} />
        </button>
      </div>
      <div className="flex min-h-0 grow">
        <div className="min-w-0 grow border-t border-[#0b3f73]"><Scene /></div>
        <div className="flex w-[24px] shrink-0 flex-col items-center border-l border-[#d0d0d0]">
          <div className="-mt-[8px] flex flex-col items-center border-b border-dashed border-[#c0c0c0] pb-[4px]">
            {sideTools.map(([label, icon], i) => (
              <button key={label} aria-label={label} className={`flex w-[18px] items-center justify-center ${i % 2 ? "h-[22px]" : "h-[21px]"}`}>
                <Glyph name={icon} className="h-[15px] w-[15px]" />
              </button>
            ))}
          </div>
          <Caret className="mt-auto mr-auto mb-[5px] ml-[3px] rotate-90" />
        </div>
      </div>
    </main>
  );
}

export default function App() {
  return (
    <div className="flex h-screen flex-col overflow-hidden bg-white font-['Noto_Sans',sans-serif] text-black">
      <Header />
      <Ribbon />
      <SelectionBar />
      <div className="flex min-h-0 grow">
        <Rail />
        <Navigator />
        <Graphics />
      </div>
      <footer className="h-[14px] shrink-0 border-t border-[#b4b4b4] pl-[2px] text-[7px] leading-[13px] font-bold">
        Выберите объекты и нажмите MB3 или дважды щелкните мышью на объекте
      </footer>
    </div>
  );
}
